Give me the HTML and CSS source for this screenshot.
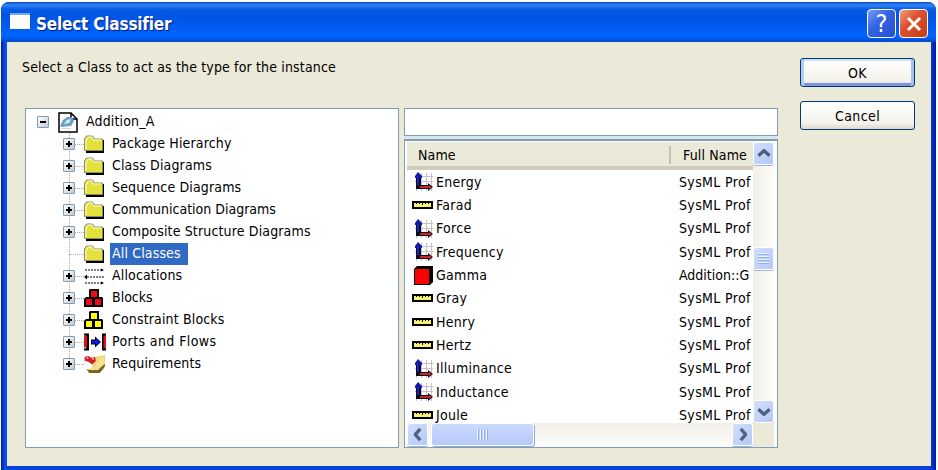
FILE: index.html
```
<!DOCTYPE html>
<html lang="en">
<head>
  <meta charset="UTF-8" />
  <title>Select Classifier</title>
  <link rel="stylesheet" href="styles.css">
</head>
<body>

  <!-- Icon sprites -->
  <svg class="sprites" shape-rendering="crispEdges">
    <symbol id="model" viewBox="0 0 20 21">
      <path d="M1 1h12l6 6v13H1z" fill="#fff" stroke="#000" stroke-width="1.5"/>
      <path d="M13 1v6h6" fill="none" stroke="#000" stroke-width="1.5"/>
      <path d="M2 14l3-6 4-3h5l2 4-3 5-9 1z" fill="#6c9fcb" shape-rendering="auto"/>
      <path d="M6 12l3-4 4-1-2 4z" fill="#d8ecf8" shape-rendering="auto"/>
      <path d="M3 16h10v1H3z" fill="#c5dcec"/>
    </symbol>
    <symbol id="folder" viewBox="0 0 20 18">
      <path d="M2 16h18v2H2zM18 5h2v12h-2z" fill="#000"/>
      <path d="M.5 15.500V4l2-3h6l2 3h8v11.500z" fill="#e3e23c" stroke="#8c8a70"/>
      <path d="M2 14V5h1l1-3h4l1 3h8" fill="none" stroke="#fffbc8"/>
    </symbol>
    <symbol id="alloc" viewBox="0 0 20 17">
      <path d="M1 2.500h16M3 9.500h17M1 15.500h16" stroke="#000" stroke-dasharray="2 1"/>
      <path d="M17 1l3 1.500-3 1.500zM3 7L0 9.500 3 12zM17 14l3 1.500-3 1.500z" fill="#000"/>
    </symbol>
    <symbol id="blocks" viewBox="0 0 20 18">
      <path d="M5 1l1-1h9v8h3l1 1v9H0v-8l2-2h3z" fill="#000"/>
      <path d="M7 2h6v6H7zM2 10h6v6H2zM11 10h6v6h-6z" fill="currentColor"/>
    </symbol>
    <symbol id="ports" viewBox="0 0 22 17">
      <path d="M0 0h5v17H0v-2h2V2H0zM22 0h-4v17h4z" fill="#000"/>
      <path d="M0 2h3v12H0zM19.500 2H22v13h-2.500z" fill="#d8141a"/>
      <path d="M7 6h4V3l6 5.500-6 5.500v-3H7z" fill="#000"/>
      <path d="M8 7h4V5l4 3.500-4 3.500v-2H8z" fill="#0a1cf0"/>
    </symbol>
    <symbol id="note" viewBox="0 0 22 19">
      <g shape-rendering="auto">
        <path d="M10 2l12-2-1 11-6 7-12-1 5-4z" fill="#ecd679"/>
        <path d="M2 15l6 1 6-1 8-6-1 4-5 6H5z" fill="#77651e"/>
        <path d="M4 15l7-3 5-9 5-1-1 8-6 6z" fill="#f3e28f"/>
        <path d="M0 2l4-1 3 2 4-1 1 4-4 4-4-3-4-1z" fill="#d4202a"/>
        <path d="M2 2h2v2H2zM8 3h2v2H8z" fill="#f79a98"/>
      </g>
    </symbol>
    <symbol id="axes" viewBox="0 0 19 19">
      <path d="M7.500 1v18M12.500 1v18M17.500 1v18M1 4.500h18M1 9.500h18M2.500 13v6" stroke="#c3c0c6" fill="none"/>
      <path d="M2 5h5v8h7v-2l5 4-5 4v-2H2z" fill="#0a0a18"/>
      <path d="M4 0l4 4v2H1V4z" fill="#1219a8"/>
      <path d="M3 5h2v8H3z" fill="#1621d0"/>
      <path d="M6 14h9v-1l3 2-3 2v-1H6z" fill="#c4242a"/>
    </symbol>
    <symbol id="ruler" viewBox="0 0 21 8">
      <path d="M0 0h21v8H0z" fill="#000"/>
      <path d="M2 2h17v4H2z" fill="#fbf36a"/>
      <path d="M4.500 2v1M7.500 2v1M10.500 2v2M13.500 2v1M16.500 2v1" stroke="#000"/>
    </symbol>
    <symbol id="cube" viewBox="0 0 19 19">
      <path d="M0 3l3-3h16v16l-3 3H0z" fill="#000"/>
      <path d="M1 3h14v15H1z" fill="#fe0000"/>
    </symbol>
    <symbol id="chevron" viewBox="0 0 12 8">
      <path d="M1 6l5-4.500L11 6" fill="none" stroke="#4d6185" stroke-width="3" shape-rendering="auto"/>
    </symbol>
  </svg>

  <div class="window">
    <div class="titlebar">
      <span class="app-icon"></span>
      <h1>Select Classifier</h1>
      <button class="caption-btn help">?</button>
      <button class="caption-btn close">
        <svg width="16" height="16" viewBox="0 0 16 16"><path d="M2 2l12 12M14 2L2 14" stroke="#fff" stroke-width="3"/></svg>
      </button>
    </div>

    <div class="content">
      <div class="main">
        <p class="prompt">Select a Class to act as the type for the instance</p>

        <div class="panes">
          <!-- Model tree -->
          <div class="tree">
            <div class="root"><i class="toggle minus"></i><svg class="icon-model"><use href="#model"/></svg><span>Addition_A</span></div>
            <ul>
              <li><i class="toggle"></i><svg><use href="#folder"/></svg><span>Package Hierarchy</span></li>
              <li><i class="toggle"></i><svg><use href="#folder"/></svg><span>Class Diagrams</span></li>
              <li><i class="toggle"></i><svg><use href="#folder"/></svg><span>Sequence Diagrams</span></li>
              <li><i class="toggle"></i><svg><use href="#folder"/></svg><span class="tight">Communication Diagrams</span></li>
              <li><i class="toggle"></i><svg><use href="#folder"/></svg><span>Composite Structure Diagrams</span></li>
              <li><i class="toggle none"></i><svg><use href="#folder"/></svg><span class="selected">All Classes</span></li>
              <li><i class="toggle"></i><svg><use href="#alloc"/></svg><span>Allocations</span></li>
              <li><i class="toggle"></i><svg class="red"><use href="#blocks"/></svg><span class="tight">Blocks</span></li>
              <li><i class="toggle"></i><svg class="yellow"><use href="#blocks"/></svg><span>Constraint Blocks</span></li>
              <li><i class="toggle"></i><svg class="wide"><use href="#ports"/></svg><span class="loose">Ports and Flows</span></li>
              <li><i class="toggle"></i><svg class="wide"><use href="#note"/></svg><span>Requirements</span></li>
            </ul>
          </div>

          <div class="side">
            <input type="text" class="search">

            <!-- Classifier list -->
            <div class="list">
              <div class="rows">
                <div class="head"><span class="name">Name</span><span class="full">Full Name</span></div>
                <div class="row"><svg><use href="#axes"/></svg><span class="name">Energy</span><span class="path">SysML Prof</span></div>
                <div class="row"><svg class="ruler"><use href="#ruler"/></svg><span class="name">Farad</span><span class="path">SysML Prof</span></div>
                <div class="row"><svg><use href="#axes"/></svg><span class="name">Force</span><span class="path">SysML Prof</span></div>
                <div class="row"><svg><use href="#axes"/></svg><span class="name">Frequency</span><span class="path">SysML Prof</span></div>
                <div class="row"><svg><use href="#cube"/></svg><span class="name">Gamma</span><span class="path qualified">Addition::G</span></div>
                <div class="row"><svg class="ruler"><use href="#ruler"/></svg><span class="name">Gray</span><span class="path">SysML Prof</span></div>
                <div class="row"><svg class="ruler"><use href="#ruler"/></svg><span class="name">Henry</span><span class="path">SysML Prof</span></div>
                <div class="row"><svg class="ruler"><use href="#ruler"/></svg><span class="name">Hertz</span><span class="path">SysML Prof</span></div>
                <div class="row"><svg><use href="#axes"/></svg><span class="name">Illuminance</span><span class="path">SysML Prof</span></div>
                <div class="row"><svg><use href="#axes"/></svg><span class="name">Inductance</span><span class="path">SysML Prof</span></div>
                <div class="row"><svg class="ruler"><use href="#ruler"/></svg><span class="name">Joule</span><span class="path">SysML Prof</span></div>
              </div>
              <div class="vscroll">
                <div class="sb up"><svg><use href="#chevron"/></svg></div>
                <div class="sb vthumb"><i class="grip"></i></div>
                <div class="sb down"><svg><use href="#chevron"/></svg></div>
              </div>
              <div class="hscroll">
                <div class="sb left"><svg><use href="#chevron"/></svg></div>
                <div class="sb hthumb"><i class="grip"></i></div>
                <div class="sb right"><svg><use href="#chevron"/></svg></div>
              </div>
              <div class="corner"></div>
            </div>
          </div>
        </div>
      </div>

      <div class="buttons">
        <button class="btn default">OK</button>
        <button class="btn">Cancel</button>
      </div>
    </div>
  </div>

</body>
</html>
```
FILE: styles.css
```
* {
  box-sizing: border-box;
}

body {
  margin: 0;
  height: 470px;
  padding: 2px 2px 0 1px;
  overflow: hidden;
  background: #fff;
  font-family: 'DejaVu Sans Condensed', 'DejaVu Sans', sans-serif;
  font-size: 14px;
  letter-spacing: 0.15px;
  color: #000;
}

button, input {
  font: inherit;
  letter-spacing: inherit;
  padding: 0;
  margin: 0;
}

.sprites {
  position: absolute;
  width: 0;
  height: 0;
}

.window {
  height: 468px;
  display: flex;
  flex-direction: column;
  border-radius: 8px 8px 0 0;
  overflow: hidden;
  background: linear-gradient(90deg, #0019b0, #0a4fe8 4px, #0a4fe8 928px, #0839d8 930px, #0019a8);
}

.titlebar {
  height: 40px;
  flex: none;
  display: flex;
  align-items: center;
  padding: 3px 8px 0 9px;
  background: linear-gradient(#0a48c8, #2f86f5 3px, #0a5ee6 7px, #0054e3 14px, #005af0 24px, #0066ff 33px, #005cf0 36px, #0046c8);
}

.titlebar h1 {
  flex: 1;
  margin: 0 0 0 6px;
  color: #fff;
  font-size: 17px;
  font-weight: bold;
  letter-spacing: -0.2px;
  text-shadow: 1px 1px 1px #0a1883;
}

.app-icon {
  width: 20px;
  height: 16px;
  margin-top: -5px;
  background: #fff;
  border-top: 2px solid #7aa6e8;
}

.caption-btn {
  width: 29px;
  height: 29px;
  margin-left: 3px;
  border: 1.5px solid #fff;
  border-radius: 4px;
  color: #fff;
  display: flex;
  align-items: center;
  justify-content: center;
}

.help {
  background: linear-gradient(135deg, #7c9ff5, #3664e4 40%, #2450d0);
  font-size: 25px;
}

.close {
  background: linear-gradient(135deg, #f0a088, #dd5130 40%, #c63c14);
}

.content {
  flex: 1;
  display: flex;
  margin: 0 5px 0 6px;
  background: #ebe9d8;
  border-bottom: 4px solid #0842dc;
}

.main {
  width: 771px;
  padding-left: 18px;
}

.prompt {
  height: 66px;
  margin: 0 0 0 -3px;
  padding-top: 15px;
  line-height: 20px;
}

.panes {
  display: flex;
  gap: 5px;
}

.tree {
  width: 374px;
  height: 340px;
  padding: 2px 0 0 11px;
  border: 1px solid #7f9db9;
  background: #fff;
}

.root, .tree li {
  height: 22px;
  display: flex;
  align-items: center;
}

.tree ul {
  list-style: none;
  margin: 0;
  padding: 0 0 0 26px;
}

.tree li {
  background:
    repeating-linear-gradient(#aaa 0 1px, transparent 1px 2px) 6px 0 / 1px 22px no-repeat,
    repeating-linear-gradient(90deg, #aaa 0 1px, transparent 1px 2px) 6px 11px / 15px 1px no-repeat;
}

.tree li:last-child {
  background-size: 1px 11px, 15px 1px;
}

.tree li svg {
  width: 20px;
  height: 18px;
  margin-left: 9px;
}

.tree li svg.wide {
  width: 22px;
  margin-right: -2px;
}

.tree .icon-model {
  width: 20px;
  height: 21px;
  margin: 0 6px 0 9px;
}

.red {
  color: #f00a14;
}

.yellow {
  color: #fffb00;
}

.tree span {
  padding: 0 2px 2px;
  line-height: 20px;
}

.tree li span {
  margin-left: 6px;
}

.tree li .tight {
  letter-spacing: 0;
}

.tree li .loose {
  letter-spacing: 0.4px;
}

.tree .selected {
  padding-right: 7px;
  background: #316ac5;
  color: #fff;
}

.toggle {
  width: 12px;
  height: 12px;
  border: 1px solid #7f9db9;
  border-radius: 1px;
  background:
    linear-gradient(#000, #000) center / 6px 2px no-repeat,
    linear-gradient(#000, #000) center / 2px 6px no-repeat,
    linear-gradient(135deg, #fff, #c0cad0);
}

.toggle.minus {
  background:
    linear-gradient(#000, #000) center / 6px 2px no-repeat,
    linear-gradient(135deg, #fff, #c0cad0);
}

.toggle.none {
  visibility: hidden;
}

.side {
  width: 374px;
  background: #dbe6ea;
}

.search {
  display: block;
  width: 374px;
  height: 28px;
  margin-bottom: 3px;
  border: 1px solid #7f9db9;
  background: #fff;
}

.list {
  height: 309px;
  display: grid;
  grid-template-columns: 346px 23px;
  grid-template-rows: 281px 24px;
  padding: 1px 0 0 2px;
  border: 1px solid #7f9db9;
  border-top-width: 2px;
  background: #fff;
}

.rows {
  overflow: hidden;
}

.head {
  height: 28px;
  display: flex;
  align-items: center;
  background: #ebe9d8;
  border-bottom: 4px solid #d0cdbc;
  padding: 2px 0 0 11px;
}

.head .name {
  width: 253px;
  border-right: 2px solid #c3c0ae;
  line-height: 18px;
}

.head .full {
  padding-left: 12px;
}

.row {
  height: 23.35px;
  display: flex;
  align-items: center;
  padding-left: 7px;
  white-space: nowrap;
}

.row svg {
  flex: none;
  width: 19px;
  height: 19px;
}

.row svg.ruler {
  width: 21px;
  height: 8px;
  margin-left: -2px;
}

.row .name {
  flex: none;
  width: 246px;
  padding-left: 3px;
  letter-spacing: 0.3px;
}

.row .path {
  letter-spacing: 0.35px;
}

.row .qualified {
  letter-spacing: 0;
}

.vscroll {
  display: flex;
  flex-direction: column;
  background: linear-gradient(90deg, #f0efe8, #fefefb);
}

.hscroll {
  display: flex;
  background: linear-gradient(#f0efe8, #fefefb);
}

.corner {
  margin-right: 2px;
  background: #ebe9d8;
}

.sb {
  flex: none;
  width: 21px;
  height: 23px;
  display: flex;
  align-items: center;
  justify-content: center;
  border: 1px solid #fff;
  border-radius: 3px;
  background: linear-gradient(135deg, #d2defe, #b4c8f6);
  box-shadow: 0 1px 0 #9db4e0;
}

.sb svg {
  width: 14px;
  height: 9px;
}

.vthumb {
  margin-top: 82px;
}

.down {
  margin-top: auto;
}

.down svg {
  transform: rotate(180deg);
}

.left svg {
  transform: rotate(-90deg);
}

.right {
  margin-left: auto;
}

.right svg {
  transform: rotate(90deg);
}

.hthumb {
  width: 103px;
  margin-left: 3px;
  background: linear-gradient(#cbd9fe, #b6c8f8);
  box-shadow: 1px 1px 0 #8da8dc;
}

.grip {
  width: 11px;
  height: 11px;
  background: repeating-linear-gradient(90deg, #eef4fe 0 1px, #8cb0f8 1px 2px, transparent 2px 3px);
}

.vthumb .grip {
  background: repeating-linear-gradient(#eef4fe 0 1px, #8cb0f8 1px 2px, transparent 2px 3px);
}

.buttons {
  padding: 16px 0 0 22px;
}

.btn {
  display: block;
  width: 115px;
  height: 29px;
  margin-bottom: 14px;
  border: 1.5px solid #003c74;
  border-radius: 3px;
  background: linear-gradient(#fff, #f3f2ea 80%, #dcd8cc);
  letter-spacing: 0.4px;
}

.btn.default {
  box-shadow: inset 3px 0 0 #b4cdf5, inset -3px 0 0 #a5c0f0, inset 0 2px 0 #cee0fc, inset 0 -3px 0 #7b95dc;
}
```
